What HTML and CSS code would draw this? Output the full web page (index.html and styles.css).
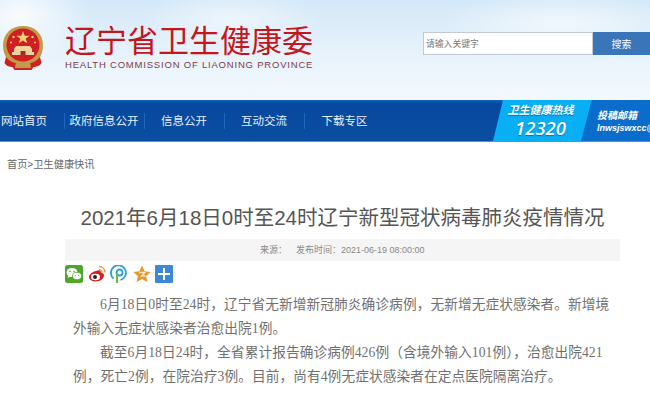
FILE: index.html
```html
<!DOCTYPE html>
<html lang="zh-CN">
<head>
    <meta charset="UTF-8">
    <meta name="viewport" content="width=device-width, initial-scale=1.0">
    <title>辽宁省卫生健康委</title>
    <link rel="stylesheet" href="styles.css">
</head>
<body>
    <header class="top">
        <div class="brand">
            <svg class="emblem" width="42" height="46" viewBox="0 0 42 46">
                <path d="M21 1C9 1 1 9 1 20c0 8 3 14 8 18h24c5-4 8-10 8-18C41 9 33 1 21 1z" fill="#c39a4a"/>
                <circle cx="21" cy="20" r="16.500" fill="#cf1f22"/>
                <path d="M21 6l1.700 4.700h5l-4 2.900 1.500 4.700-4.200-2.900-4.200 2.900 1.500-4.700-4-2.900h5z" fill="#f3d37a"/>
                <circle cx="11.500" cy="12" r="1.200" fill="#f3d37a"/>
                <circle cx="30.500" cy="12" r="1.200" fill="#f3d37a"/>
                <circle cx="9" cy="17.500" r="1" fill="#f3d37a"/>
                <circle cx="33" cy="17.500" r="1" fill="#f3d37a"/>
                <path d="M14 21h14l2 3H12z" fill="#f1d596"/>
                <path d="M12 24h18v3h2v3H10v-3h2z" fill="#ead2a4"/>
                <path d="M18.500 26h5v4h-5z" fill="#a8291f"/>
                <path d="M4 32c4 5 10 7 17 7s13-2 17-7l1.500 6c-2 3-5 4-8 4l-2 3h-17l-2-3c-3 0-6-1-8-4z" fill="#d0201f"/>
                <path d="M14 37h14l1 6H13z" fill="#c39a4a"/>
            </svg>
            <div class="brand-text">
                <div class="brand-name">辽宁省卫生健康委</div>
                <div class="brand-en">HEALTH COMMISSION OF LIAONING PROVINCE</div>
            </div>
        </div>
        <form class="search">
            <input class="search-input" type="text" placeholder="请输入关键字">
            <button class="search-btn" type="button">搜索</button>
        </form>
    </header>

    <nav class="nav">
        <a class="nav-item" href="#">网站首页</a>
        <a class="nav-item" href="#">政府信息公开</a>
        <a class="nav-item" href="#">信息公开</a>
        <a class="nav-item" href="#">互动交流</a>
        <a class="nav-item last" href="#">下载专区</a>
        <div class="hotline">
            <div class="hotline-title">卫生健康热线</div>
            <div class="hotline-num">12320</div>
        </div>
        <div class="mail">
            <div class="mail-title">投稿邮箱</div>
            <div class="mail-addr">lnwsjswxcc@163.com</div>
        </div>
    </nav>

    <div class="crumb">首页&gt;卫生健康快讯</div>

    <main class="article">
        <h1 class="title">2021年6月18日0时至24时辽宁新型冠状病毒肺炎疫情情况</h1>
        <div class="meta"><span class="meta-source">来源：</span><span>发布时间：2021-06-19 08:00:00</span></div>
        <div class="share">
            <svg width="18" height="18" viewBox="0 0 18 18">
                <rect width="18" height="18" rx="2.500" fill="#4da82a"/>
                <ellipse cx="7" cy="7.500" rx="5.500" ry="4.500" fill="#fff"/>
                <path d="M3.500 10.500l-1 2.500 3-1.500z" fill="#fff"/>
                <ellipse cx="12" cy="11" rx="4.500" ry="3.700" fill="#fff" stroke="#4da82a" stroke-width=".8"/>
                <circle cx="5" cy="6.500" r=".8" fill="#4da82a"/>
                <circle cx="9" cy="6.500" r=".8" fill="#4da82a"/>
                <circle cx="10.500" cy="10.500" r=".6" fill="#4da82a"/>
                <circle cx="13.500" cy="10.500" r=".6" fill="#4da82a"/>
            </svg>
            <svg width="18" height="18" viewBox="0 0 18 18">
                <path d="M8 6c3-1.500 5-.5 5 1.500 2 .5 3 1.500 3 3 0 3-4 6-8 6-4 0-7-1.800-7-4.500C1 9.500 5 6.500 8 6z" fill="#d81e21"/>
                <ellipse cx="7.500" cy="12" rx="4.500" ry="3.300" fill="#fff"/>
                <circle cx="7" cy="12" r="2" fill="#222"/>
                <path d="M11 1.500c3.500 0 6 2.500 6 6" fill="none" stroke="#e8972b" stroke-width="1.400"/>
                <path d="M11 4.500c1.700 0 3 1.300 3 3" fill="none" stroke="#e8972b" stroke-width="1.200"/>
            </svg>
            <svg width="18" height="18" viewBox="0 0 18 18">
                <path d="M3.500 13.500A7.500 7.500 0 1 1 10.500 15" fill="none" stroke="#2c9fd6" stroke-width="1.800"/>
                <circle cx="9.500" cy="7.500" r="3" fill="none" stroke="#2c9fd6" stroke-width="1.800"/>
                <path d="M7 9v9" stroke="#6cb94a" stroke-width="2"/>
            </svg>
            <svg width="18" height="18" viewBox="0 0 18 18">
                <path d="M9 .5l2.600 5.700 6 .7-4.500 4.100 1.300 6L9 14l-5.400 3 1.300-6L.4 6.900l6-.7z" fill="#e9962a"/>
                <path d="M6 7.500h6l-3.500 3.500h4" fill="none" stroke="#f6e7cf" stroke-width="1.300"/>
            </svg>
            <svg width="18" height="18" viewBox="0 0 18 18">
                <rect width="18" height="18" rx="1" fill="#3c88d8"/>
                <path d="M8 3h2v5h5v2h-5v5H8v-5H3V8h5z" fill="#fff"/>
            </svg>
        </div>
        <div class="content">
            <p>6月18日0时至24时，辽宁省无新增新冠肺炎确诊病例，无新增无症状感染者。新增境外输入无症状感染者治愈出院1例。</p>
            <p>截至6月18日24时，全省累计报告确诊病例426例（含境外输入101例），治愈出院421例，死亡2例，在院治疗3例。目前，尚有4例无症状感染者在定点医院隔离治疗。</p>
        </div>
    </main>
</body>
</html>
```

FILE: styles.css
```css
html, body {
    margin: 0;
    padding: 0;
}

body {
    font-family: "Liberation Sans", "Noto Sans CJK SC", sans-serif;
    background-color: #fff;
    overflow: hidden;
    height: 402px;
}

.top {
    height: 100px;
    display: flex;
    justify-content: space-between;
    background:
        radial-gradient(ellipse 70px 45px at 20px 15px, rgba(255, 255, 255, 0.85), transparent),
        radial-gradient(ellipse 90px 30px at 230px 18px, rgba(255, 255, 255, 0.5), transparent),
        radial-gradient(ellipse 120px 30px at 560px 22px, rgba(255, 255, 255, 0.6), transparent),
        linear-gradient(#d3e8f8, #e6f2fb 50%, #f3f9fe);
}

.brand {
    display: flex;
    align-items: flex-start;
    padding-top: 25px;
    padding-left: 2px;
}

.emblem {
    margin-right: 21px;
}

.brand-name {
    font-size: 31px;
    line-height: 34px;
    color: #c4161c;
    white-space: nowrap;
}

.brand-en {
    font-size: 9.5px;
    line-height: 12px;
    margin-top: 0;
    letter-spacing: 0.8px;
    color: #7d3b49;
    white-space: nowrap;
}

.search {
    display: flex;
    padding-top: 32px;
    margin: 0;
}

.search-input {
    width: 170px;
    height: 23px;
    box-sizing: border-box;
    border: 1px solid #c3c9d0;
    padding: 0 2px;
    font-family: inherit;
    font-size: 8.8px;
    background-color: #fff;
}

.search-input::placeholder {
    color: #777;
}

.search-btn {
    width: 57px;
    height: 23px;
    border: none;
    padding: 0;
    font-family: inherit;
    font-size: 10px;
    color: #fff;
    background-color: #3a74b9;
}

.nav {
    height: 42px;
    display: flex;
    align-items: center;
    margin-left: -15px;
    background: linear-gradient(#0d63bd 0, #06489d 4px, #0a4ea2 100%);
    border-bottom: 1px solid #5b8fd0;
    box-sizing: border-box;
    position: relative;
}

.nav-item {
    width: 80px;
    height: 16px;
    padding-right: 1px;
    line-height: 16px;
    text-align: center;
    font-size: 11.5px;
    color: #e8f0fa;
    text-decoration: none;
    border-right: 1px solid #1d66bd;
    box-sizing: border-box;
}

.nav-item.last {
    border-right: none;
}

/* the two slanted blocks on the right of the bar */
.hotline {
    position: absolute;
    left: 508px;
    top: 0;
    width: 99px;
    height: 41px;
    box-sizing: border-box;
    padding-right: 4px;
    clip-path: polygon(10px 0, 100% 0, 89px 100%, 0 100%);
    background-color: #08aff4;
    color: #fff;
    text-align: center;
    text-shadow: 0 1px 1px rgba(0, 60, 120, 0.5);
}

.hotline-title {
    font-size: 11px;
    line-height: 13px;
    margin-top: 4px;
    font-weight: bold;
    font-style: italic;
}

.hotline-num {
    font-family: "Open Sans", sans-serif;
    font-size: 18.5px;
    line-height: 21px;
    font-weight: 600;
    font-style: italic;
}

.mail {
    position: absolute;
    left: 596px;
    top: 0;
    width: 69px;
    height: 41px;
    overflow: hidden;
    padding-left: 16px;
    box-sizing: border-box;
    clip-path: polygon(11px 0, 100% 0, 100% 100%, 0 100%);
    background-color: #0a6ccb;
    color: #fff;
    white-space: nowrap;
}

.mail-title {
    font-size: 10px;
    line-height: 12px;
    margin-top: 10px;
    font-weight: bold;
    font-style: italic;
}

.mail-addr {
    font-size: 9px;
    line-height: 12px;
    font-weight: bold;
    font-style: italic;
}

.crumb {
    padding: 16px 0 0 7px;
    font-size: 10.2px;
    line-height: 14px;
    color: #666;
}

.article {
    width: 555px;
    margin: 0 0 0 65px;
}

.title {
    margin: 32px 0 0;
    height: 35px;
    font-size: 20.5px;
    line-height: 28px;
    font-weight: normal;
    text-align: center;
    color: #555;
    white-space: nowrap;
}

.meta {
    height: 22px;
    line-height: 22px;
    padding-left: 195px;
    font-size: 9px;
    color: #888;
    background-color: #f5f5f5;
}

.meta-source {
    display: inline-block;
    width: 36px;
}

.share {
    display: flex;
    gap: 4.5px;
    margin-top: 4px;
    height: 18px;
}

.content {
    margin-top: 10px;
    padding: 0 8px;
    font-family: "Liberation Serif", "Noto Sans CJK SC", serif;
    font-size: 13.7px;
    letter-spacing: 0.07px;
    line-height: 24px;
    color: #707070;
}

.content p {
    margin: 0;
    text-indent: 27px;
}
```
